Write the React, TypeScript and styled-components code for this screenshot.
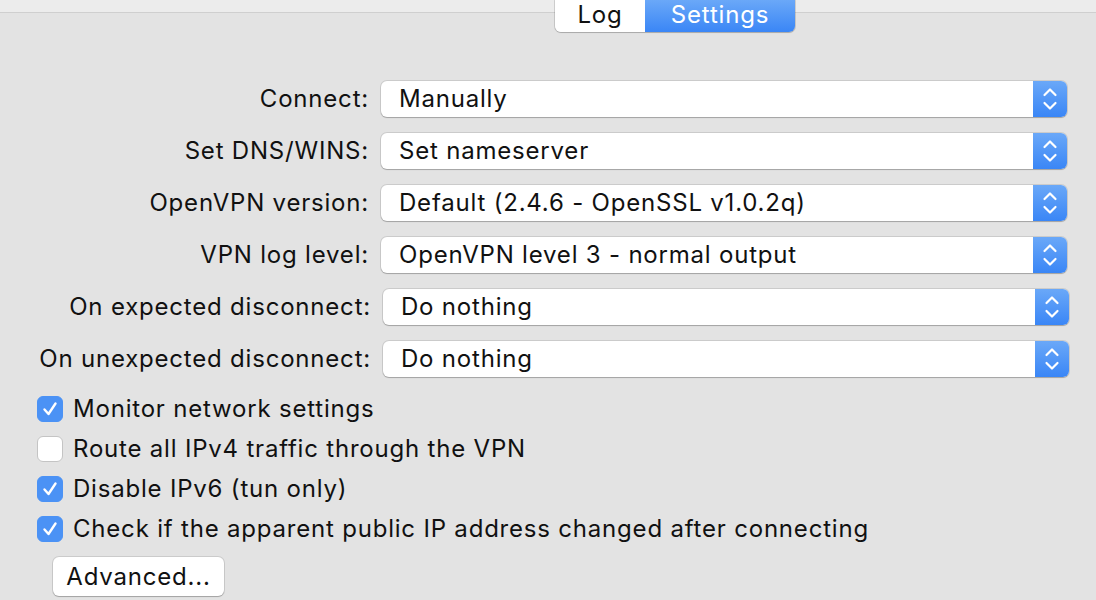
import React from 'react';
import styled, { createGlobalStyle } from 'styled-components';

const GlobalStyle = createGlobalStyle`
  html, body {
    margin: 0;
    padding: 0;
    background: #e3e3e3;
    font-family: 'Inter', 'Liberation Sans', sans-serif;
    color: #111111;
    overflow: hidden;
  }
`;

interface Choice {
  label: string;
  value: string;
  wide?: boolean;
}

const choices: Choice[] = [
  { label: 'Connect:', value: 'Manually' },
  { label: 'Set DNS/WINS:', value: 'Set nameserver' },
  { label: 'OpenVPN version:', value: 'Default (2.4.6 - OpenSSL v1.0.2q)' },
  { label: 'VPN log level:', value: 'OpenVPN level 3 - normal output' },
  { label: 'On expected disconnect:', value: 'Do nothing', wide: true },
  { label: 'On unexpected disconnect:', value: 'Do nothing', wide: true },
];

const options = [
  { text: 'Monitor network settings', checked: true },
  { text: 'Route all IPv4 traffic through the VPN', checked: false },
  { text: 'Disable IPv6 (tun only)', checked: true },
  { text: 'Check if the apparent public IP address changed after connecting', checked: true },
];

const Stepper = () => (
  <svg width="16" height="26" viewBox="0 0 16 26" fill="none">
    <path d="M2.5 9 L8 3.5 L13.5 9" stroke="#fff" strokeWidth="2.2" strokeLinecap="round" strokeLinejoin="round" />
    <path d="M2.5 17 L8 22.5 L13.5 17" stroke="#fff" strokeWidth="2.2" strokeLinecap="round" strokeLinejoin="round" />
  </svg>
);

const Tick = () => (
  <svg width="18" height="18" viewBox="0 0 18 18" fill="none">
    <path d="M3.5 9.5 L7.5 14 L14.5 3.5" stroke="#fff" strokeWidth="2.4" strokeLinecap="round" strokeLinejoin="round" />
  </svg>
);

const App: React.FC = () => {
  return (
    <Page>
      <GlobalStyle />
      <TopStrip />
      <TabsRow>
        <Tabs>
          <Tab>Log</Tab>
          <Tab active>Settings</Tab>
        </Tabs>
      </TabsRow>
      <Form>
        {choices.map(c => (
          <Row key={c.label}>
            <Label wide={c.wide}>{c.label}</Label>
            <Select>
              <SelectValue>{c.value}</SelectValue>
              <SelectArrows>
                <Stepper />
              </SelectArrows>
            </Select>
          </Row>
        ))}
      </Form>
      <Checks>
        {options.map(o => (
          <CheckRow key={o.text}>
            <Box checked={o.checked}>{o.checked && <Tick />}</Box>
            <CheckText>{o.text}</CheckText>
          </CheckRow>
        ))}
      </Checks>
      <Footer>
        <Button>Advanced...</Button>
      </Footer>
    </Page>
  );
};

export default App;

const Page = styled.div`
  width: 1096px;
  height: 600px;
  display: flex;
  flex-direction: column;
  font-size: 24px;
  letter-spacing: 0.8px;
`;

const TopStrip = styled.div`
  height: 12px;
  background: #ececec;
  border-bottom: 1px solid #cfcfcf;
`;

const TabsRow = styled.div`
  display: flex;
  padding-left: 555px;
  margin-top: -13px;
`;

const Tabs = styled.div`
  display: flex;
  height: 32px;
  border-radius: 0 0 6px 6px;
  box-shadow: 0 0 0 1px rgba(0, 0, 0, 0.12), 0 1px 1px rgba(0, 0, 0, 0.15);
  overflow: hidden;
`;

const Tab = styled.div<{ active?: boolean }>`
  display: flex;
  align-items: center;
  justify-content: center;
  width: ${p => (p.active ? 150 : 90)}px;
  padding-bottom: 4px;
  box-sizing: border-box;
  color: ${p => (p.active ? '#ffffff' : '#111111')};
  background: ${p => (p.active ? 'linear-gradient(#6aa8f8, #3a86f6)' : '#ffffff')};
`;

const Form = styled.div`
  display: flex;
  flex-direction: column;
  gap: 16px;
  margin-top: 49px;
`;

const Row = styled.div`
  display: flex;
  align-items: center;
  gap: 12px;
  height: 36px;
`;

const Label = styled.div<{ wide?: boolean }>`
  width: ${p => (p.wide ? 371 : 369)}px;
  text-align: right;
  white-space: nowrap;
  padding-bottom: 1px;
`;

const Select = styled.div`
  display: flex;
  width: 686px;
  height: 36px;
  background: #ffffff;
  border-radius: 6px;
  box-shadow: 0 0 0 1px rgba(0, 0, 0, 0.1), 0 1px 1px rgba(0, 0, 0, 0.2);
  overflow: hidden;
`;

const SelectValue = styled.div`
  flex: 1;
  display: flex;
  align-items: center;
  padding-left: 18px;
  padding-bottom: 1px;
  white-space: nowrap;
`;

const SelectArrows = styled.div`
  width: 34px;
  display: flex;
  align-items: center;
  justify-content: center;
  background: linear-gradient(#6aa8f8, #3a86f6);
`;

const Checks = styled.div`
  display: flex;
  flex-direction: column;
  margin-top: 12px;
  padding-left: 37px;
`;

const CheckRow = styled.div`
  display: flex;
  align-items: center;
  gap: 10px;
  height: 40px;
`;

const Box = styled.div<{ checked?: boolean }>`
  width: 26px;
  height: 26px;
  box-sizing: border-box;
  border-radius: 6px;
  display: flex;
  align-items: center;
  justify-content: center;
  background: ${p => (p.checked ? '#4b92f5' : '#ffffff')};
  border: 1px solid ${p => (p.checked ? '#4b92f5' : '#c4c4c4')};
`;

const CheckText = styled.div`
  white-space: nowrap;
  padding-bottom: 1px;
`;

const Footer = styled.div`
  display: flex;
  padding-left: 53px;
  margin-top: 8px;
`;

const Button = styled.div`
  width: 171px;
  height: 39px;
  box-sizing: border-box;
  display: flex;
  align-items: center;
  justify-content: center;
  background: #ffffff;
  border-radius: 6px;
  box-shadow: 0 0 0 1px rgba(0, 0, 0, 0.1), 0 1px 1px rgba(0, 0, 0, 0.2);
`;
